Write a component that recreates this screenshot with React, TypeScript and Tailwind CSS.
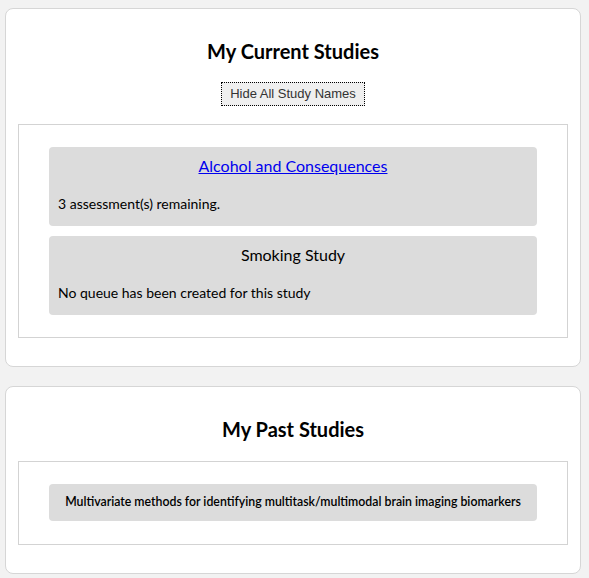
import React from 'react';

const font = { fontFamily: '"Trebuchet MS", Lato, "Noto Sans", sans-serif' };

const Panel: React.FC<{ title: string; children: React.ReactNode }> = ({ title, children }) => (
  <section className="ml-[5px] mr-[8px] rounded-lg border border-[#d6d6d6] bg-white px-3 pb-7">
    <h2 className="pt-[30px] text-center text-[20px] font-bold leading-6 text-black">{title}</h2>
    {children}
  </section>
);

export default function App() {
  return (
    <div className="min-h-screen bg-[#f2f2f2] pt-2 pb-1" style={font}>
      <Panel title="My Current Studies">
        <div className="mt-[19px] flex justify-center">
          <button className="h-6 w-[144px] border border-dotted border-black bg-[#efefef] text-[13px] text-[#333] font-['Liberation_Sans',Arial,sans-serif]">
            Hide All Study Names
          </button>
        </div>
        <div className="mt-[18px] border border-[#d3d3d3] px-[30px] pt-[22px] pb-[22px]">
          <div className="flex flex-col gap-[10px]">
            <div className="h-[79px] rounded bg-[#dcdcdc] px-[9px] pt-[9px]">
              <p className="text-center text-[16px] leading-5">
                <a href="#" className="text-[#0000ee] underline">Alcohol and Consequences</a>
              </p>
              <p className="mt-[20px] text-[14px] leading-4 text-black">3 assessment(s) remaining.</p>
            </div>
            <div className="h-[79px] rounded bg-[#dcdcdc] px-[9px] pt-[9px]">
              <p className="text-center text-[16px] leading-5 text-black">Smoking Study</p>
              <p className="mt-[20px] text-[14px] leading-4 text-black">No queue has been created for this study</p>
            </div>
          </div>
        </div>
      </Panel>
      <div className="h-[19px]" />
      <Panel title="My Past Studies">
        <div className="mt-[20px] border border-[#d3d3d3] px-[30px] pt-[22px] pb-[23px]">
          <div className="flex h-[37px] items-center justify-center rounded bg-[#dcdcdc] px-2">
            <p className="text-[12.3px] font-semibold text-black">
              Multivariate methods for identifying multitask/multimodal brain imaging biomarkers
            </p>
          </div>
        </div>
      </Panel>
    </div>
  );
}
